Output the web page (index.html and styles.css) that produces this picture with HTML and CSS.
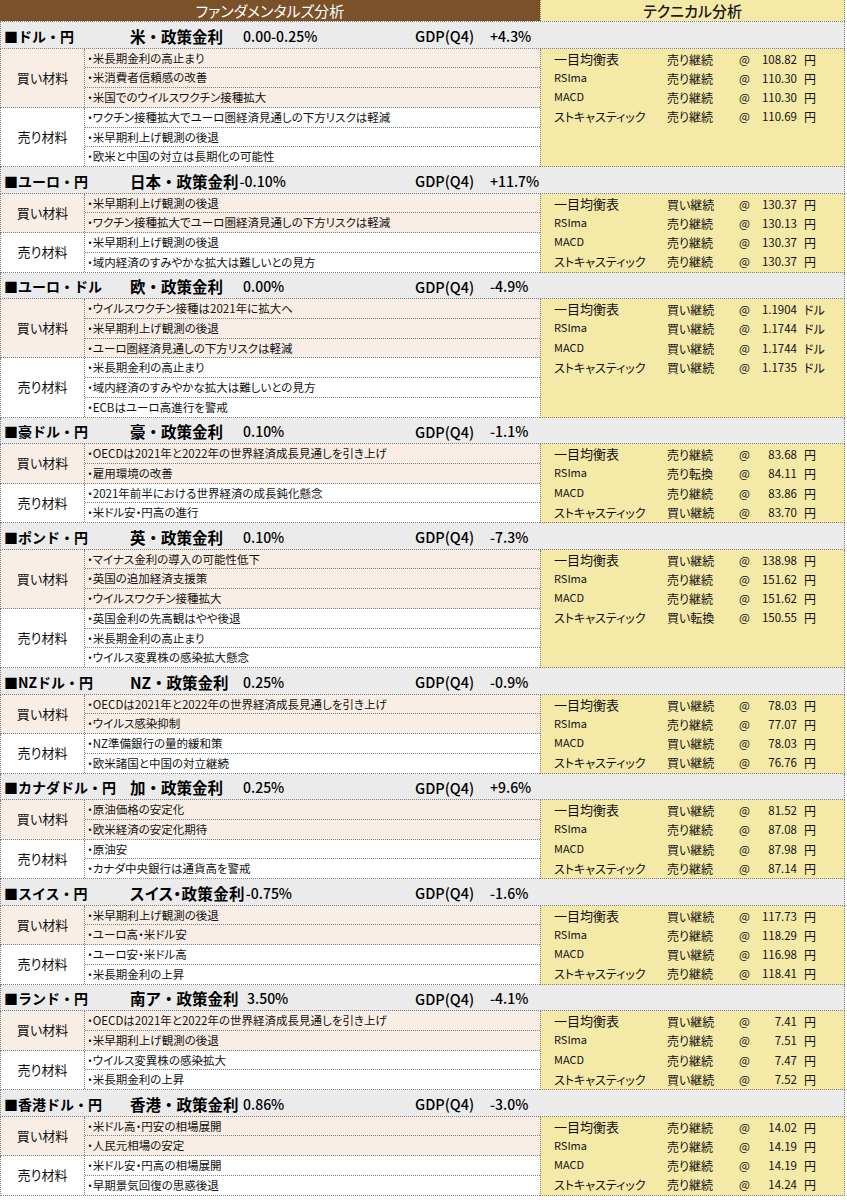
FILE: index.html
```html
<!DOCTYPE html>
<html lang="ja">
<head>
<meta charset="utf-8">
<title>ファンダメンタルズ分析・テクニカル分析</title>
<link rel="stylesheet" href="styles.css">
</head>
<body>
<div class="sheet">
  <div class="head">
    <div class="head-fund">ファンダメンタルズ分析</div>
    <div class="head-tech">テクニカル分析</div>
  </div>

  <!-- 1 -->
  <section class="section">
    <div class="title"><div class="tleft"><span class="pair">■ドル・円</span><span class="policy">米・政策金利</span><span class="rate">0.00-0.25%</span></div><span class="gdp">GDP(Q4)</span><span class="gval">+4.3%</span></div>
    <div class="body">
      <div class="fund">
        <div class="group buy"><div class="label">買い材料</div><div class="items">
          <div class="item">・米長期金利の高止まり</div>
          <div class="item">・米消費者信頼感の改善</div>
          <div class="item">・米国でのウイルスワクチン接種拡大</div>
        </div></div>
        <div class="group sell"><div class="label">売り材料</div><div class="items">
          <div class="item">・ワクチン接種拡大でユーロ圏経済見通しの下方リスクは軽減</div>
          <div class="item">・米早期利上げ観測の後退</div>
          <div class="item">・欧米と中国の対立は長期化の可能性</div>
        </div></div>
      </div>
      <div class="tech">
        <div class="tline"><span class="tn big">一目均衡表</span><span class="ts">売り継続</span><span class="ta">@</span><span class="tv">108.82</span><span class="tu">円</span></div>
        <div class="tline"><span class="tn lat">RSIma</span><span class="ts">売り継続</span><span class="ta">@</span><span class="tv">110.30</span><span class="tu">円</span></div>
        <div class="tline"><span class="tn lat">MACD</span><span class="ts">売り継続</span><span class="ta">@</span><span class="tv">110.30</span><span class="tu">円</span></div>
        <div class="tline"><span class="tn">ストキャスティック</span><span class="ts">売り継続</span><span class="ta">@</span><span class="tv">110.69</span><span class="tu">円</span></div>
      </div>
    </div>
  </section>

  <!-- 2 -->
  <section class="section">
    <div class="title"><div class="tleft"><span class="pair">■ユーロ・円</span><span class="policy tight">日本・政策金利</span><span class="rate">-0.10%</span></div><span class="gdp">GDP(Q4)</span><span class="gval">+11.7%</span></div>
    <div class="body">
      <div class="fund">
        <div class="group buy"><div class="label">買い材料</div><div class="items">
          <div class="item">・米早期利上げ観測の後退</div>
          <div class="item">・ワクチン接種拡大でユーロ圏経済見通しの下方リスクは軽減</div>
        </div></div>
        <div class="group sell"><div class="label">売り材料</div><div class="items">
          <div class="item">・米早期利上げ観測の後退</div>
          <div class="item">・域内経済のすみやかな拡大は難しいとの見方</div>
        </div></div>
      </div>
      <div class="tech">
        <div class="tline"><span class="tn big">一目均衡表</span><span class="ts">買い継続</span><span class="ta">@</span><span class="tv">130.37</span><span class="tu">円</span></div>
        <div class="tline"><span class="tn lat">RSIma</span><span class="ts">売り継続</span><span class="ta">@</span><span class="tv">130.13</span><span class="tu">円</span></div>
        <div class="tline"><span class="tn lat">MACD</span><span class="ts">売り継続</span><span class="ta">@</span><span class="tv">130.37</span><span class="tu">円</span></div>
        <div class="tline"><span class="tn">ストキャスティック</span><span class="ts">売り継続</span><span class="ta">@</span><span class="tv">130.37</span><span class="tu">円</span></div>
      </div>
    </div>
  </section>

  <!-- 3 -->
  <section class="section">
    <div class="title"><div class="tleft"><span class="pair">■ユーロ・ドル</span><span class="policy">欧・政策金利</span><span class="rate">0.00%</span></div><span class="gdp">GDP(Q4)</span><span class="gval">-4.9%</span></div>
    <div class="body">
      <div class="fund">
        <div class="group buy"><div class="label">買い材料</div><div class="items">
          <div class="item">・ウイルスワクチン接種は2021年に拡大へ</div>
          <div class="item">・米早期利上げ観測の後退</div>
          <div class="item">・ユーロ圏経済見通しの下方リスクは軽減</div>
        </div></div>
        <div class="group sell"><div class="label">売り材料</div><div class="items">
          <div class="item">・米長期金利の高止まり</div>
          <div class="item">・域内経済のすみやかな拡大は難しいとの見方</div>
          <div class="item">・ECBはユーロ高進行を警戒</div>
        </div></div>
      </div>
      <div class="tech">
        <div class="tline"><span class="tn big">一目均衡表</span><span class="ts">買い継続</span><span class="ta">@</span><span class="tv">1.1904</span><span class="tu">ドル</span></div>
        <div class="tline"><span class="tn lat">RSIma</span><span class="ts">買い継続</span><span class="ta">@</span><span class="tv">1.1744</span><span class="tu">ドル</span></div>
        <div class="tline"><span class="tn lat">MACD</span><span class="ts">買い継続</span><span class="ta">@</span><span class="tv">1.1744</span><span class="tu">ドル</span></div>
        <div class="tline"><span class="tn">ストキャスティック</span><span class="ts">買い継続</span><span class="ta">@</span><span class="tv">1.1735</span><span class="tu">ドル</span></div>
      </div>
    </div>
  </section>

  <!-- 4 -->
  <section class="section">
    <div class="title"><div class="tleft"><span class="pair">■豪ドル・円</span><span class="policy">豪・政策金利</span><span class="rate">0.10%</span></div><span class="gdp">GDP(Q4)</span><span class="gval">-1.1%</span></div>
    <div class="body">
      <div class="fund">
        <div class="group buy"><div class="label">買い材料</div><div class="items">
          <div class="item">・OECDは2021年と2022年の世界経済成長見通しを引き上げ</div>
          <div class="item">・雇用環境の改善</div>
        </div></div>
        <div class="group sell"><div class="label">売り材料</div><div class="items">
          <div class="item">・2021年前半における世界経済の成長鈍化懸念</div>
          <div class="item">・米ドル安・円高の進行</div>
        </div></div>
      </div>
      <div class="tech">
        <div class="tline"><span class="tn big">一目均衡表</span><span class="ts">売り継続</span><span class="ta">@</span><span class="tv">83.68</span><span class="tu">円</span></div>
        <div class="tline"><span class="tn lat">RSIma</span><span class="ts">売り転換</span><span class="ta">@</span><span class="tv">84.11</span><span class="tu">円</span></div>
        <div class="tline"><span class="tn lat">MACD</span><span class="ts">売り継続</span><span class="ta">@</span><span class="tv">83.86</span><span class="tu">円</span></div>
        <div class="tline"><span class="tn">ストキャスティック</span><span class="ts">買い継続</span><span class="ta">@</span><span class="tv">83.70</span><span class="tu">円</span></div>
      </div>
    </div>
  </section>

  <!-- 5 -->
  <section class="section">
    <div class="title"><div class="tleft"><span class="pair">■ポンド・円</span><span class="policy">英・政策金利</span><span class="rate">0.10%</span></div><span class="gdp">GDP(Q4)</span><span class="gval">-7.3%</span></div>
    <div class="body">
      <div class="fund">
        <div class="group buy"><div class="label">買い材料</div><div class="items">
          <div class="item">・マイナス金利の導入の可能性低下</div>
          <div class="item">・英国の追加経済支援策</div>
          <div class="item">・ウイルスワクチン接種拡大</div>
        </div></div>
        <div class="group sell"><div class="label">売り材料</div><div class="items">
          <div class="item">・英国金利の先高観はやや後退</div>
          <div class="item">・米長期金利の高止まり</div>
          <div class="item">・ウイルス変異株の感染拡大懸念</div>
        </div></div>
      </div>
      <div class="tech">
        <div class="tline"><span class="tn big">一目均衡表</span><span class="ts">買い継続</span><span class="ta">@</span><span class="tv">138.98</span><span class="tu">円</span></div>
        <div class="tline"><span class="tn lat">RSIma</span><span class="ts">売り継続</span><span class="ta">@</span><span class="tv">151.62</span><span class="tu">円</span></div>
        <div class="tline"><span class="tn lat">MACD</span><span class="ts">売り継続</span><span class="ta">@</span><span class="tv">151.62</span><span class="tu">円</span></div>
        <div class="tline"><span class="tn">ストキャスティック</span><span class="ts">買い転換</span><span class="ta">@</span><span class="tv">150.55</span><span class="tu">円</span></div>
      </div>
    </div>
  </section>

  <!-- 6 -->
  <section class="section">
    <div class="title"><div class="tleft"><span class="pair">■NZドル・円</span><span class="policy">NZ・政策金利</span><span class="rate">0.25%</span></div><span class="gdp">GDP(Q4)</span><span class="gval">-0.9%</span></div>
    <div class="body">
      <div class="fund">
        <div class="group buy"><div class="label">買い材料</div><div class="items">
          <div class="item">・OECDは2021年と2022年の世界経済成長見通しを引き上げ</div>
          <div class="item">・ウイルス感染抑制</div>
        </div></div>
        <div class="group sell"><div class="label">売り材料</div><div class="items">
          <div class="item">・NZ準備銀行の量的緩和策</div>
          <div class="item">・欧米諸国と中国の対立継続</div>
        </div></div>
      </div>
      <div class="tech">
        <div class="tline"><span class="tn big">一目均衡表</span><span class="ts">買い継続</span><span class="ta">@</span><span class="tv">78.03</span><span class="tu">円</span></div>
        <div class="tline"><span class="tn lat">RSIma</span><span class="ts">売り継続</span><span class="ta">@</span><span class="tv">77.07</span><span class="tu">円</span></div>
        <div class="tline"><span class="tn lat">MACD</span><span class="ts">買い継続</span><span class="ta">@</span><span class="tv">78.03</span><span class="tu">円</span></div>
        <div class="tline"><span class="tn">ストキャスティック</span><span class="ts">買い継続</span><span class="ta">@</span><span class="tv">76.76</span><span class="tu">円</span></div>
      </div>
    </div>
  </section>

  <!-- 7 -->
  <section class="section">
    <div class="title"><div class="tleft"><span class="pair">■カナダドル・円</span><span class="policy">加・政策金利</span><span class="rate">0.25%</span></div><span class="gdp">GDP(Q4)</span><span class="gval">+9.6%</span></div>
    <div class="body">
      <div class="fund">
        <div class="group buy"><div class="label">買い材料</div><div class="items">
          <div class="item">・原油価格の安定化</div>
          <div class="item">・欧米経済の安定化期待</div>
        </div></div>
        <div class="group sell"><div class="label">売り材料</div><div class="items">
          <div class="item">・原油安</div>
          <div class="item">・カナダ中央銀行は通貨高を警戒</div>
        </div></div>
      </div>
      <div class="tech">
        <div class="tline"><span class="tn big">一目均衡表</span><span class="ts">買い継続</span><span class="ta">@</span><span class="tv">81.52</span><span class="tu">円</span></div>
        <div class="tline"><span class="tn lat">RSIma</span><span class="ts">売り継続</span><span class="ta">@</span><span class="tv">87.08</span><span class="tu">円</span></div>
        <div class="tline"><span class="tn lat">MACD</span><span class="ts">買い継続</span><span class="ta">@</span><span class="tv">87.98</span><span class="tu">円</span></div>
        <div class="tline"><span class="tn">ストキャスティック</span><span class="ts">売り継続</span><span class="ta">@</span><span class="tv">87.14</span><span class="tu">円</span></div>
      </div>
    </div>
  </section>

  <!-- 8 -->
  <section class="section">
    <div class="title"><div class="tleft"><span class="pair">■スイス・円</span><span class="policy tight prop">スイス・政策金利</span><span class="rate">-0.75%</span></div><span class="gdp">GDP(Q4)</span><span class="gval">-1.6%</span></div>
    <div class="body">
      <div class="fund">
        <div class="group buy"><div class="label">買い材料</div><div class="items">
          <div class="item">・米早期利上げ観測の後退</div>
          <div class="item">・ユーロ高・米ドル安</div>
        </div></div>
        <div class="group sell"><div class="label">売り材料</div><div class="items">
          <div class="item">・ユーロ安・米ドル高</div>
          <div class="item">・米長期金利の上昇</div>
        </div></div>
      </div>
      <div class="tech">
        <div class="tline"><span class="tn big">一目均衡表</span><span class="ts">買い継続</span><span class="ta">@</span><span class="tv">117.73</span><span class="tu">円</span></div>
        <div class="tline"><span class="tn lat">RSIma</span><span class="ts">売り継続</span><span class="ta">@</span><span class="tv">118.29</span><span class="tu">円</span></div>
        <div class="tline"><span class="tn lat">MACD</span><span class="ts">買い継続</span><span class="ta">@</span><span class="tv">116.98</span><span class="tu">円</span></div>
        <div class="tline"><span class="tn">ストキャスティック</span><span class="ts">売り継続</span><span class="ta">@</span><span class="tv">118.41</span><span class="tu">円</span></div>
      </div>
    </div>
  </section>

  <!-- 9 -->
  <section class="section">
    <div class="title"><div class="tleft"><span class="pair">■ランド・円</span><span class="policy">南ア・政策金利</span><span class="rate gap">3.50%</span></div><span class="gdp">GDP(Q4)</span><span class="gval">-4.1%</span></div>
    <div class="body">
      <div class="fund">
        <div class="group buy"><div class="label">買い材料</div><div class="items">
          <div class="item">・OECDは2021年と2022年の世界経済成長見通しを引き上げ</div>
          <div class="item">・米早期利上げ観測の後退</div>
        </div></div>
        <div class="group sell"><div class="label">売り材料</div><div class="items">
          <div class="item">・ウイルス変異株の感染拡大</div>
          <div class="item">・米長期金利の上昇</div>
        </div></div>
      </div>
      <div class="tech">
        <div class="tline"><span class="tn big">一目均衡表</span><span class="ts">買い継続</span><span class="ta">@</span><span class="tv">7.41</span><span class="tu">円</span></div>
        <div class="tline"><span class="tn lat">RSIma</span><span class="ts">売り継続</span><span class="ta">@</span><span class="tv">7.51</span><span class="tu">円</span></div>
        <div class="tline"><span class="tn lat">MACD</span><span class="ts">売り継続</span><span class="ta">@</span><span class="tv">7.47</span><span class="tu">円</span></div>
        <div class="tline"><span class="tn">ストキャスティック</span><span class="ts">買い継続</span><span class="ta">@</span><span class="tv">7.52</span><span class="tu">円</span></div>
      </div>
    </div>
  </section>

  <!-- 10 -->
  <section class="section">
    <div class="title"><div class="tleft"><span class="pair">■香港ドル・円</span><span class="policy">香港・政策金利</span><span class="rate">0.86%</span></div><span class="gdp">GDP(Q4)</span><span class="gval">-3.0%</span></div>
    <div class="body">
      <div class="fund">
        <div class="group buy"><div class="label">買い材料</div><div class="items">
          <div class="item">・米ドル高・円安の相場展開</div>
          <div class="item">・人民元相場の安定</div>
        </div></div>
        <div class="group sell"><div class="label">売り材料</div><div class="items">
          <div class="item">・米ドル安・円高の相場展開</div>
          <div class="item">・早期景気回復の思惑後退</div>
        </div></div>
      </div>
      <div class="tech">
        <div class="tline"><span class="tn big">一目均衡表</span><span class="ts">売り継続</span><span class="ta">@</span><span class="tv">14.02</span><span class="tu">円</span></div>
        <div class="tline"><span class="tn lat">RSIma</span><span class="ts">売り継続</span><span class="ta">@</span><span class="tv">14.19</span><span class="tu">円</span></div>
        <div class="tline"><span class="tn lat">MACD</span><span class="ts">売り継続</span><span class="ta">@</span><span class="tv">14.19</span><span class="tu">円</span></div>
        <div class="tline"><span class="tn">ストキャスティック</span><span class="ts">売り継続</span><span class="ta">@</span><span class="tv">14.24</span><span class="tu">円</span></div>
      </div>
    </div>
  </section>
</div>
</body>
</html>
```

FILE: styles.css
```css
html, body {
  margin: 0;
  padding: 0;
  background: #ffffff;
}
body {
  font-family: "Noto Sans CJK JP", "Noto Sans", sans-serif;
  color: #111;
  font-feature-settings: "palt";
}
.sheet {
  width: 845px;
}
.head {
  display: flex;
  height: 22px;
  box-sizing: border-box;
  border-bottom: 1px dotted #7f7f7f;
}
.head-fund {
  width: 540px;
  background: #7b5129;
  color: #ffffff;
  font-size: 15px;
  line-height: 21px;
  text-align: center;
}
.head-tech {
  flex: 1;
  background: #f5e9a8;
  color: #1a1a1a;
  font-size: 15px;
  line-height: 21px;
  text-align: center;
  border-left: 1px dotted #7f7f7f;
  border-right: 1px dotted #7f7f7f;
  font-weight: 500;
}
.title {
  height: 26.5px;
  box-sizing: border-box;
  background: #ebebeb;
  border-left: 1px dotted #7f7f7f;
  border-right: 1px dotted #7f7f7f;
  border-bottom: 1px dotted #7f7f7f;
  display: flex;
  align-items: center;
  padding: 2px 0 0 3px;
  white-space: nowrap;
  color: #000;
  font-feature-settings: normal;
}
.tleft {
  width: 411px;
  display: flex;
  align-items: center;
}
.pair {
  width: 126px;
  font-size: 14px;
  font-weight: 700;
}
.policy {
  min-width: 113px;
  font-size: 15.5px;
  font-weight: 700;
}
.policy.tight {
  min-width: 0;
  margin-right: 1px;
}
.policy.prop {
  font-feature-settings: "palt";
  letter-spacing: 0.3px;
}
.rate {
  font-size: 14px;
  font-weight: 500;
}
.rate.gap {
  margin-left: 4px;
}
.gdp {
  width: 75px;
  font-size: 14.5px;
  font-weight: 500;
}
.gval {
  font-size: 14px;
  font-weight: 500;
}
.body {
  display: flex;
}
.fund {
  width: 540px;
}
.group {
  display: flex;
  border-left: 1px dotted #7f7f7f;
  border-bottom: 1px dotted #7f7f7f;
}
.group.buy {
  background: #f8eee6;
}
.group.sell {
  background: #ffffff;
}
.label {
  width: 83px;
  border-right: 1px dotted #7f7f7f;
  display: flex;
  align-items: center;
  justify-content: center;
  font-size: 13px;
  padding-bottom: 1px;
}
.items {
  flex: 1;
}
.item {
  height: 19.75px;
  box-sizing: border-box;
  border-bottom: 1px dotted #7f7f7f;
  font-size: 11.5px;
  line-height: 18.75px;
  padding-left: 2px;
  white-space: nowrap;
  overflow: hidden;
}
.item:last-child {
  height: 18.75px;
  border-bottom: none;
}
.tech {
  flex: 1;
  background: #f5e9a8;
  border-left: 1px dotted #7f7f7f;
  border-right: 1px dotted #7f7f7f;
  border-bottom: 1px dotted #7f7f7f;
  padding-top: 1px;
}
.tline {
  display: grid;
  grid-template-columns: 113px 72px 14px 44px auto;
  height: 19.25px;
  line-height: 19.75px;
  padding-left: 13px;
  font-size: 12px;
  white-space: nowrap;
}
.tn.big {
  font-size: 13px;
  line-height: 17px;
}
.tn.lat {
  font-size: 11px;
  line-height: 17px;
}
.tv {
  text-align: right;
  font-size: 11.5px;
}
.ta {
  font-size: 11.5px;
}
.tu {
  padding-left: 7px;
}
```
